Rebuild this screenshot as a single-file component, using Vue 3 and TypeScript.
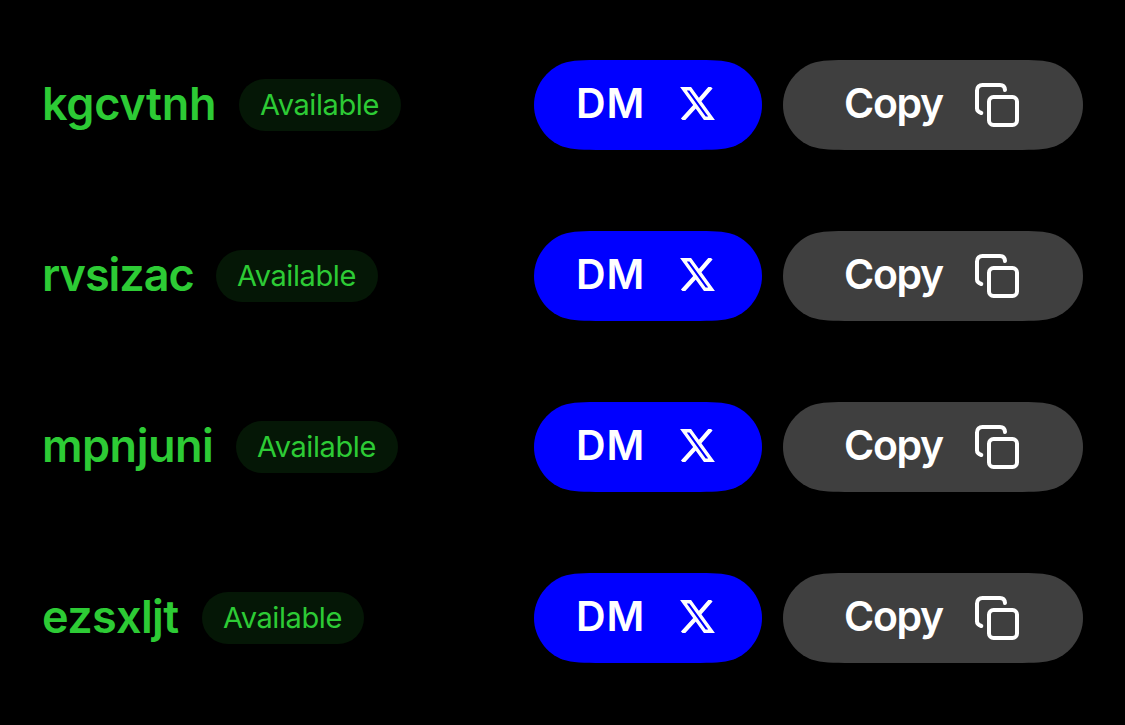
<script setup lang="ts">
interface Handle {
  name: string
  spacing: number
  width: number
}

const handles: Handle[] = [
  { name: 'kgcvtnh', spacing: -0.3, width: 174 },
  { name: 'rvsizac', spacing: -1.05, width: 151 },
  { name: 'mpnjuni', spacing: -0.5, width: 171 },
  { name: 'ezsxljt', spacing: -0.65, width: 137 },
]

// Outline of a pill with continuous corners, 90px tall.
const pill = (w: number): string =>
  `M68.8 0H${w - 68.8}C${w - 49} 0 ${w - 39} 0 ${w - 28.4} 3.4` +
  `C${w - 13} 9.5 ${w} 25.5 ${w} 45C${w} 64.5 ${w - 13} 80.5 ${w - 28.4} 86.6` +
  `C${w - 39} 90 ${w - 49} 90 ${w - 68.8} 90H68.8C49 90 39 90 28.4 86.6` +
  `C13 80.5 0 64.5 0 45C0 25.5 13 9.5 28.4 3.4C39 0 49 0 68.8 0Z`
</script>

<template>
  <main class="list">
    <section v-for="h in handles" :key="h.name" class="row">
      <span class="name" :style="{ width: h.width + 'px', letterSpacing: h.spacing + 'px' }">{{ h.name }}</span>
      <span class="badge">Available</span>
      <div class="actions">
        <button class="btn dm" type="button">
          <svg class="shape" viewBox="0 0 228 90"><path :d="pill(228)" fill="#0000ff" /></svg>
          <span class="label">DM</span>
          <svg class="x-icon" viewBox="0 0 35 33" fill="none" stroke="#fff">
            <path d="M3.4 1.7H10.2L31.6 31.3H24.8Z" stroke-width="3.4" />
            <path d="M31 0L19 13.8M15.2 19L2.5 33" stroke-width="4.2" />
          </svg>
        </button>
        <button class="btn copy" type="button">
          <svg class="shape" viewBox="0 0 300 90"><path :d="pill(300)" fill="#3f3f3f" /></svg>
          <span class="label">Copy</span>
          <svg class="copy-icon" viewBox="0 0 46 46" fill="none" stroke="#fff" stroke-width="4" stroke-linecap="round">
            <rect x="14" y="14" width="28" height="28" rx="4.5" />
            <path d="M6.3 30C3.6 29 2 28 2 25.5V7.5C2 4.2 4.2 2 7.5 2H25C28 2 29.8 4 30 7" />
          </svg>
        </button>
      </div>
    </section>
  </main>
</template>

<style>
body { background: #000; }
</style>

<style scoped>
.list {
  box-sizing: border-box;
  width: 1125px;
  height: 725px;
  padding: 60px 42px 0;
  display: flex;
  flex-direction: column;
  gap: 81px;
  overflow: hidden;
  background: #000;
  font-family: Inter, "Liberation Sans", sans-serif;
}
.row {
  height: 90px;
  flex: none;
  display: flex;
  align-items: center;
}
.name {
  color: #2dcb35;
  font-size: 45px;
  line-height: 60px;
  font-weight: 600;
  margin-top: -3px;
  white-space: nowrap;
}
.badge {
  box-sizing: border-box;
  width: 162px;
  height: 52px;
  padding-left: 21px;
  margin-left: 23px;
  border-radius: 26px;
  background: #051706;
  color: #2dcb35;
  font-size: 29px;
  line-height: 52px;
  letter-spacing: -0.4px;
  white-space: nowrap;
}
.actions {
  margin-left: auto;
  display: flex;
  gap: 21px;
}
.btn {
  position: relative;
  box-sizing: border-box;
  height: 90px;
  margin: 0;
  padding: 0;
  border: 0;
  background: none;
  color: #fff;
  font: 600 41px/54px Inter, "Liberation Sans", sans-serif;
  display: flex;
  align-items: center;
}
.dm { width: 228px; padding-left: 42px; }
.copy { width: 300px; padding-left: 61px; }
.shape {
  position: absolute;
  inset: 0;
  width: 100%;
  height: 100%;
}
.label {
  position: relative;
  width: 104px;
  margin-top: -5px;
  text-align: left;
  letter-spacing: 1px;
}
.copy .label { width: 131px; letter-spacing: -1.3px; }
.x-icon { position: relative; width: 35px; height: 33px; margin-top: -4px; }
.copy-icon { position: relative; width: 46px; height: 46px; margin-top: 2px; }
</style>
